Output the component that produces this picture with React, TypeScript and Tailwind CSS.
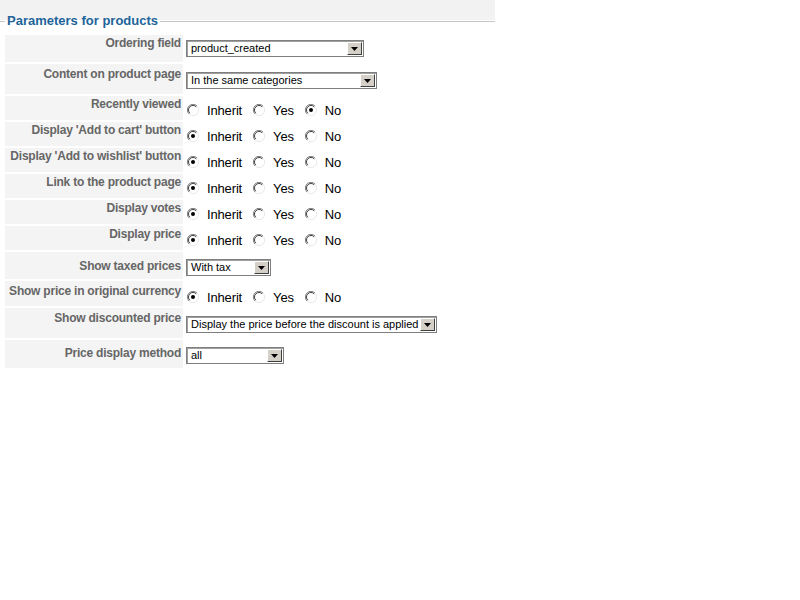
type Row =
  | { label: string; h: number; pt: number; lpt: number; kind: 'select'; value: string; width: number }
  | { label: string; h: number; pt: number; lpt: number; kind: 'radio'; checked: number };

const rows: Row[] = [
  { label: 'Ordering field', h: 27, pt: 5, lpt: 1, kind: 'select', value: 'product_created', width: 178 },
  { label: 'Content on product page', h: 30, pt: 8, lpt: 3, kind: 'select', value: 'In the same categories', width: 191 },
  { label: 'Recently viewed', h: 24, pt: 7, lpt: 1, kind: 'radio', checked: 2 },
  { label: "Display 'Add to cart' button", h: 24, pt: 7, lpt: 1, kind: 'radio', checked: 0 },
  { label: "Display 'Add to wishlist' button", h: 24, pt: 7, lpt: 1, kind: 'radio', checked: 0 },
  { label: 'Link to the product page', h: 24, pt: 7, lpt: 1, kind: 'radio', checked: 0 },
  { label: 'Display votes', h: 24, pt: 7, lpt: 1, kind: 'radio', checked: 0 },
  { label: 'Display price', h: 24, pt: 7, lpt: 1, kind: 'radio', checked: 0 },
  { label: 'Show taxed prices', h: 27, pt: 7, lpt: 7, kind: 'select', value: 'With tax', width: 85 },
  { label: 'Show price in original currency', h: 25, pt: 9, lpt: 3, kind: 'radio', checked: 0 },
  { label: 'Show discounted price', h: 30, pt: 8, lpt: 3, kind: 'select', value: 'Display the price before the discount is applied', width: 251 },
  { label: 'Price display method', h: 28, pt: 7, lpt: 6, kind: 'select', value: 'all', width: 98 },
];

function Radio({ on }: { on: boolean }) {
  return (
    <svg width="12" height="12" viewBox="0 0 12 12" className="flex-shrink-0">
      <circle cx="6" cy="6" r="5.5" fill="#ffffff" />
      {/* classic 3D ring: dark top-left, light bottom-right */}
      <path d="M10 2 A5.5 5.5 0 0 0 2 10" fill="none" stroke="#808080" strokeWidth="1" />
      <path d="M9.2 2.8 A4.5 4.5 0 0 0 2.8 9.2" fill="none" stroke="#404040" strokeWidth="1" />
      <path d="M2 10 A5.5 5.5 0 0 0 10 2" fill="none" stroke="#e8e8e8" strokeWidth="1" />
      {on && <circle cx="6" cy="6" r="2" fill="#000000" />}
    </svg>
  );
}

function RadioGroup({ checked }: { checked: number }) {
  const opts = ['Inherit', 'Yes', 'No'];
  return (
    <div className="flex items-start">
      {opts.map((o, i) => (
        <div key={o} className="flex items-start">
          <div className="mt-[1px] ml-[2px] mr-[8px]">
            <Radio on={i === checked} />
          </div>
          <span className="text-[13px] leading-[15px] tracking-[-0.15px] text-black mr-[9px]">{o}</span>
        </div>
      ))}
    </div>
  );
}

function Select({ value, width }: { value: string; width: number }) {
  return (
    <div
      className="ml-[1px] h-[17px] flex items-stretch bg-white border border-[#7f7f7f] shadow-[inset_1px_1px_0_#a0a0a0]"
      style={{ width }}
    >
      <span className="flex-1 pl-[4px] text-[11px] leading-[15px] text-black whitespace-nowrap overflow-hidden">
        {value}
      </span>
      <div className="m-[1px] w-[15px] flex items-center justify-center bg-[#d4d0c8] border border-t-white border-l-white border-b-[#404040] border-r-[#404040]">
        <svg width="7" height="4" viewBox="0 0 7 4">
          <path d="M0 0 H7 L3.5 4 Z" fill="#000000" />
        </svg>
      </div>
    </div>
  );
}

export default function App() {
  return (
    <div className="w-[800px] h-[600px] bg-white font-['Liberation_Sans',Arial,sans-serif]">
      <div className="w-[495px]">
        <div className="h-[20px] bg-[#f2f2f2]" />
        <fieldset className="-mt-[7px] border-0 border-t border-[#c6c6c6]">
          <legend className="ml-[5px] px-[2px] text-[13px] leading-[16px] font-bold text-[#21649a]">
            Parameters for products
          </legend>

          {/* Parameters table */}
          <div className="mt-[6px] pl-[5px] flex flex-col gap-[2px]">
            {rows.map((r) => (
              <div key={r.label} className="flex" style={{ height: r.h }}>
                <div
                  className="w-[178px] flex-shrink-0 bg-[#f4f4f4] text-right pr-[2px] text-[12px] leading-[14px] tracking-[-0.22px] font-bold text-[#666666] whitespace-nowrap"
                  style={{ paddingTop: r.lpt }}
                >
                  {r.label}
                </div>
                <div className="pl-[2px]" style={{ paddingTop: r.pt }}>
                  {r.kind === 'select' ? (
                    <Select value={r.value} width={r.width} />
                  ) : (
                    <RadioGroup checked={r.checked} />
                  )}
                </div>
              </div>
            ))}
          </div>
        </fieldset>
      </div>
    </div>
  );
}
